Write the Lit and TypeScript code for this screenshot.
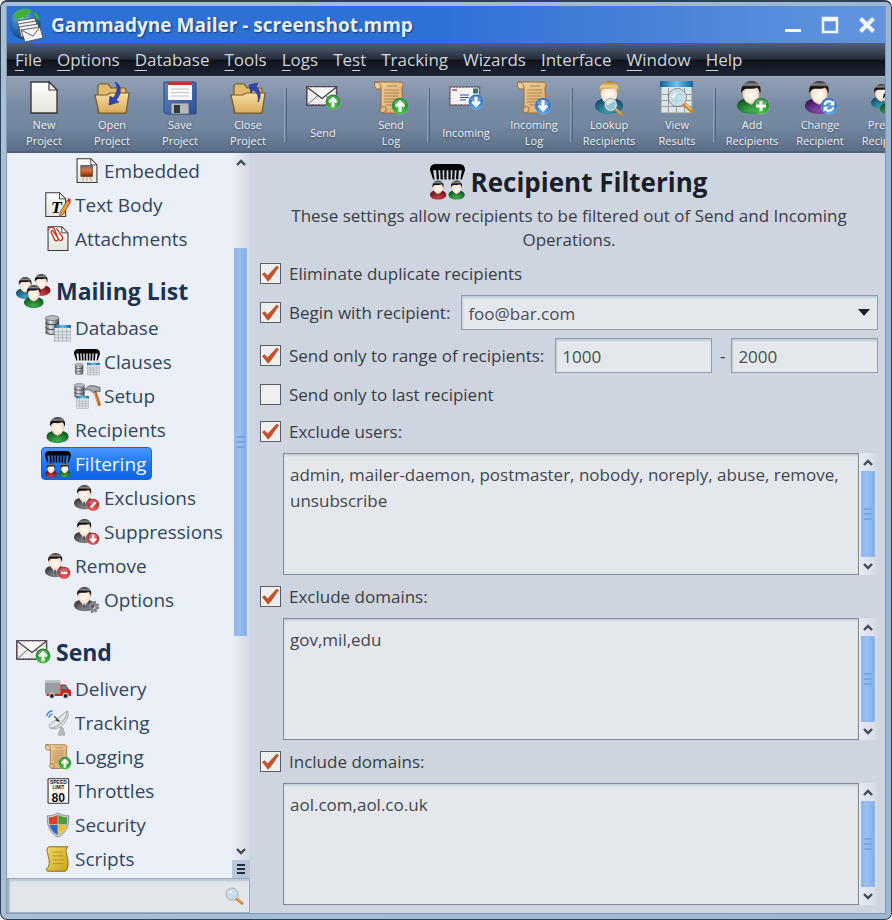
import { LitElement, html, css, svg, nothing, TemplateResult } from "lit";
import { customElement, property, state } from "lit/decorators.js";
import { classMap } from "lit/directives/class-map.js";

/* ---------- icon parts ---------- */

const defs = svg`
  <linearGradient id="paper" x1="0" y1="0" x2="0" y2="1"><stop offset="0" stop-color="#fdfdfa"/><stop offset="1" stop-color="#e4e5dc"/></linearGradient>
  <linearGradient id="folder" x1="0" y1="0" x2="0" y2="1"><stop offset="0" stop-color="#f7dfa4"/><stop offset="1" stop-color="#d9ab5c"/></linearGradient>
  <linearGradient id="parch" x1="0" y1="0" x2="1" y2="1"><stop offset="0" stop-color="#f1d2a0"/><stop offset="1" stop-color="#d9a868"/></linearGradient>
  <linearGradient id="gold" x1="0" y1="0" x2="1" y2="1"><stop offset="0" stop-color="#f2dc63"/><stop offset="1" stop-color="#caa21d"/></linearGradient>
  <linearGradient id="metal" x1="0" y1="0" x2="1" y2="0"><stop offset="0" stop-color="#565b5e"/><stop offset=".35" stop-color="#e3e6e6"/><stop offset="1" stop-color="#4b5053"/></linearGradient>
  <linearGradient id="floppy" x1="0" y1="0" x2="1" y2="1"><stop offset="0" stop-color="#5c86c8"/><stop offset="1" stop-color="#2a4f9a"/></linearGradient>
  <linearGradient id="sunset" x1="0" y1="0" x2="0" y2="1"><stop offset="0" stop-color="#4a6fb0"/><stop offset=".4" stop-color="#e8742a"/><stop offset="1" stop-color="#7c2d14"/></linearGradient>
  <linearGradient id="hdr" x1="0" y1="0" x2="1" y2="0"><stop offset="0" stop-color="#15609c"/><stop offset=".5" stop-color="#6cc3e8"/><stop offset="1" stop-color="#15609c"/></linearGradient>
  <radialGradient id="globe" cx=".4" cy=".3" r=".8"><stop offset="0" stop-color="#7cc4ee"/><stop offset=".5" stop-color="#2d6fb4"/><stop offset="1" stop-color="#0c2f66"/></radialGradient>
  <radialGradient id="skin" cx=".5" cy=".5" r=".6"><stop offset="0" stop-color="#fffaf4"/><stop offset=".6" stop-color="#fbeadb"/><stop offset="1" stop-color="#e0a884"/></radialGradient>
  <radialGradient id="b-green" cx=".5" cy=".8" r=".9"><stop offset="0" stop-color="#4fce45"/><stop offset="1" stop-color="#0b6b1c"/></radialGradient>
  <radialGradient id="b-blue" cx=".5" cy=".8" r=".9"><stop offset="0" stop-color="#62b4f5"/><stop offset="1" stop-color="#164fa8"/></radialGradient>
  <radialGradient id="b-red" cx=".5" cy=".8" r=".9"><stop offset="0" stop-color="#f0605c"/><stop offset="1" stop-color="#a3101a"/></radialGradient>
  <radialGradient id="s-green" cx=".5" cy=".8" r=".8"><stop offset="0" stop-color="#3fae50"/><stop offset="1" stop-color="#0a4d1b"/></radialGradient>
  <radialGradient id="s-teal" cx=".5" cy=".8" r=".8"><stop offset="0" stop-color="#3f9db8"/><stop offset="1" stop-color="#0c4660"/></radialGradient>
  <radialGradient id="s-purple" cx=".5" cy=".8" r=".8"><stop offset="0" stop-color="#8a4bb0"/><stop offset="1" stop-color="#35104f"/></radialGradient>
  <radialGradient id="s-red" cx=".5" cy=".8" r=".8"><stop offset="0" stop-color="#cc3f43"/><stop offset="1" stop-color="#5e0c10"/></radialGradient>
  <radialGradient id="s-grey" cx=".5" cy=".8" r=".8"><stop offset="0" stop-color="#8b8b8d"/><stop offset="1" stop-color="#2c2c30"/></radialGradient>
  <linearGradient id="h-black" x1="0" y1="0" x2="0" y2="1"><stop offset="0" stop-color="#2a2a2a"/><stop offset=".3" stop-color="#8a8a8a"/><stop offset=".45" stop-color="#151515"/><stop offset="1" stop-color="#000"/></linearGradient>
  <linearGradient id="h-blond" x1="0" y1="0" x2="0" y2="1"><stop offset="0" stop-color="#a8762a"/><stop offset=".4" stop-color="#f0cf86"/><stop offset="1" stop-color="#8f5f1a"/></linearGradient>`;

const at = (x: number, y: number, s: number, part: TemplateResult) =>
  svg`<g transform="translate(${x} ${y}) scale(${s})">${part}</g>`;

const person = (shirt: string, hair = "black", suit = false) => svg`
  <path d="M0 25C0 20 5 17 14 17s14 3 14 8c0 5-7 8-14 8S0 30 0 25z" fill="url(#s-${shirt})"/>
  <path d="M9 18l5 ${suit ? 12 : 6} 5-${suit ? 12 : 6}z" fill="#fff"/>
  ${suit ? svg`<path d="M13 22h2l1 5-2 4-2-4z" fill="#5a5e68"/>` : nothing}
  <path d="M5.500 11c0 7 4 12 8.500 12s8.500-5 8.500-12-3-6-8.500-6-8.500-1-8.500 6z" fill="url(#skin)"/>
  <path d="M4.500 12C3 5 8 0 14 0c8 0 11 6 9 13-.4-3-1-5-3-6.500-4 2.500-9 .5-12 1.500-2 1-2.600 2-3.500 4z" fill="url(#h-${hair})"/>`;

const arrowUp = svg`<path d="M0-5.500L5-.5 3.200 1.200 1.300-.7V5.500h-2.600V-.7L-3.200 1.200-5-.5z" fill="#fff" stroke="#fff" stroke-width=".6"/>`;
const arrowDown = svg`<g transform="rotate(180)">${arrowUp}</g>`;
const plus = svg`<path d="M-1.400-5h2.800v3.600H5v2.800H1.400V5h-2.800V1.400H-5v-2.800h3.600z" fill="#fff"/>`;
const slash = svg`<path d="M-3.200 3.200L3.200-3.200" stroke="#fff" stroke-width="3.200"/>`;
const minus = svg`<path d="M-4.500 0h9" stroke="#fff" stroke-width="3"/>`;
const cycle = svg`<path d="M-4.500-1A4.600 4.600 0 0 1 3.400-3.200M4.500 1A4.600 4.600 0 0 1-3.400 3.200" fill="none" stroke="#fff" stroke-width="2"/>
  <path d="M5.400-5.600v5h-5zM-5.400 5.600v-5h5z" fill="#fff"/>`;
const badge = (tone: string, glyph: TemplateResult) => svg`
  <circle r="8.300" fill="url(#b-${tone})" stroke="#fff" stroke-opacity=".3" stroke-width=".6"/>
  <path d="M-6.500-2.500a7 7 0 0 1 13 0C3-1-3-1-6.500-2.500z" fill="#fff" opacity=".25"/>${glyph}`;

const envelope = svg`
  <rect x=".7" y=".7" width="30" height="18.600" fill="#eeeeec" stroke="#3c3c4c" stroke-width="1.200"/>
  <rect x="1.200" y="1.200" width="29" height="17.600" fill="none" stroke="#c0423f" stroke-width="1" stroke-dasharray="2 4"/>
  <rect x="1.200" y="1.200" width="29" height="17.600" fill="none" stroke="#3a55a0" stroke-width="1" stroke-dasharray="2 4" stroke-dashoffset="3"/>
  <path d="M1.500 18.500l11-9.500M30 18.500L19 9" stroke="#707078" fill="none"/>
  <path d="M1.500 1.500L16 12.500 30 1.500" fill="#f8f8f6" stroke="#3c3c44" stroke-width="1.200"/>`;
const envelopeBack = svg`
  <rect x=".7" y=".7" width="30" height="18.600" fill="#f3f3f4" stroke="#66606c"/>
  <rect x="1.200" y="1.200" width="29" height="17.600" fill="none" stroke="#c0423f" stroke-dasharray="2 4"/>
  <rect x="1.200" y="1.200" width="29" height="17.600" fill="none" stroke="#3a55a0" stroke-dasharray="2 4" stroke-dashoffset="3"/>
  <path d="M3 4h5" stroke="#b34a48" stroke-width="1.500"/><rect x="24" y="2.500" width="5" height="5" fill="#3c6e74"/>
  <path d="M11 9h9M11 11.500h9M11 14h6" stroke="#3848b0" stroke-width="1.200"/>`;
const parchment = svg`
  <path d="M1 1h25c3 0 4 3 2 6l1 20c1 4-1 5-4 5H10c-4 0-5-3-3-6V8H3C1 8 0 3 1 1z" fill="url(#parch)" stroke="#9a6a34" stroke-width="1"/>
  <path d="M1 1c4 0 6 2 6 7" fill="none" stroke="#9a6a34"/><path d="M7 27c2-2 5-2 5 1s-2 3.500-3 3.500" fill="#e7bd84" stroke="#9a6a34"/>
  <path d="M13 5h10M10 9h15M10 12h15M10 15h14M10 18h15M10 21h14M12 24h12" stroke="#8d6538" stroke-width=".8" opacity=".8"/>`;
const sheet = svg`
  <path d="M1 1h18l8 8v23H1z" fill="url(#paper)" stroke="#3a3a3a" stroke-width="1.400"/>
  <path d="M19 1v8h8z" fill="#fafaf6" stroke="#3a3a3a" stroke-width="1.200"/>`;
const lens = svg`
  <path d="M15 15l8 7" stroke="#c98432" stroke-width="4" stroke-linecap="round"/>
  <path d="M14.500 13.500l8 7" stroke="#f3cf96" stroke-width="1.200"/>
  <circle cx="9" cy="9" r="7.500" fill="#b4dcec" fill-opacity=".75" stroke="#d9dcdf" stroke-width="2.200"/>
  <circle cx="9" cy="9" r="8.600" fill="none" stroke="#5c6670" stroke-width=".6"/>
  <path d="M5 9a4 4 0 0 1 4-4" stroke="#fff" stroke-width="1.800" fill="none"/>`;
const table = svg`
  <rect x="1" y="1" width="31" height="31" fill="#dfe5e7" stroke="#89949a"/>
  <path d="M1 13.500h31M1 19.500h31M1 25.500h31M8.500 7v25M16.500 7v25M24.500 7v25" stroke="#97a3a8" stroke-width="1.200"/>
  <rect x="0" y="0" width="33" height="6" fill="url(#hdr)"/>`;
const db = svg`
  <path d="M1 5v23c0 5 22 5 22 0V5z" fill="url(#metal)"/>
  <path d="M1 12c0 5 22 5 22 0M1 20c0 5 22 5 22 0M1 28c0 5 22 5 22 0" fill="none" stroke="#34383b" stroke-width="1.600"/>
  <ellipse cx="12" cy="5" rx="11" ry="4" fill="#b9bebf" stroke="#54595c"/>`;
const comb = svg`
  <path d="M0 6C0 2 2 0 6 0h22c4 0 6 2 6 6l-1 3-2 6h-1.500L31 6H3l1.500 9H3L1 9z" fill="#050505"/>
  <path d="M7 5l.7 10M11 5l.4 10M15 5v10M19 5v10M23 5l-.4 10M27 5l-.7 10" stroke="#050505" stroke-width="2.200"/>`;
const folder = svg`
  <path d="M3 32V5c0-1 1-2 2-2h8l3 4h13c1 0 2 1 2 2v23z" fill="#e3bb6f" stroke="#7a5a22" stroke-width="1.200"/>
  <path d="M0 14h12l3-2h19l-3 20H4z" fill="url(#folder)" stroke="#7a5a22" stroke-width="1.200"/>`;
const hammer = svg`
  <path d="M13 6l6 18" stroke="#c06a30" stroke-width="4" stroke-linecap="round"/>
  <path d="M12.500 8l5 15" stroke="#eaa770" stroke-width="1.200"/>
  <path d="M1 6C4 0 10 0 14 1l6 2v5l-5-1-4 2C8 5 5 5 1 6z" fill="#a7adb2" stroke="#4b5053"/>`;
const gear = svg`
  <circle r="5" fill="none" stroke="#85898d" stroke-width="4"/>
  <circle r="7.500" fill="none" stroke="#6b6f73" stroke-width="2.600" stroke-dasharray="2.900 3"/>`;

const icons: Record<string, TemplateResult> = {
  page: at(3, 0, 1, sheet),
  open: svg`${folder}<path d="M20 1c7 3 7 12 1 18l3 2-10 3 1-9 3 2c5-6 5-11 2-16z" fill="#2f46b5" stroke="#1c2b80" stroke-width=".6"/>`,
  close: svg`${folder}<path d="M27 21c4-6 2-13-2-15l2-4-9 2 2 8 2-3c4 2 6 6 5 12z" fill="#2f46b5" stroke="#1c2b80" stroke-width=".6"/>`,
  save: svg`<path d="M1 1h31l1 1v31H3l-2-2z" fill="url(#floppy)" stroke="#2a4480"/>
    <path d="M5 1h24v18H5z" fill="#f7f7f8"/><path d="M5 1h24v3H5z" fill="#c5342c"/>
    <path d="M8 8h18M8 11.500h18M8 15h18" stroke="#c4c8d0"/>
    <path d="M8 22h18v11H8z" fill="#b4b9be" stroke="#555c66" stroke-width=".8"/><path d="M11 24h6v8h-6z" fill="#33373d"/>`,
  send: svg`${at(0, 5, 1, envelope)}${at(27, 21, .9, badge("green", arrowUp))}`,
  incoming: svg`${at(0, 5, 1, envelopeBack)}${at(27, 21, .9, badge("blue", arrowDown))}`,
  sendLog: svg`${parchment}${at(26, 25, 1, badge("green", arrowUp))}`,
  incomingLog: svg`${parchment}${at(26, 25, 1, badge("blue", arrowDown))}`,
  lookup: svg`${at(3, 0, 1, person("teal", "blond"))}${at(12, 17, .75, lens)}`,
  view: svg`${table}${at(8, 7, 1.050, lens)}`,
  add: svg`${at(2, 0, 1, person("green"))}${at(26, 25, 1, badge("green", plus))}`,
  change: svg`${at(2, 0, 1, person("purple"))}${at(26, 25, 1, badge("blue", cycle))}`,
  preview: svg`${at(0, 3, .75, person("teal"))}${at(9, 9, .75, person("green"))}`,
  embedded: svg`${at(3, 0, 1, sheet)}<path d="M14 23l-3 7M20 23l3 7M17 23v7" stroke="#b7793c"/><rect x="9" y="10" width="15" height="14" fill="url(#sunset)" stroke="#6d3a20"/>`,
  textBody: svg`${at(0, 0, 1, sheet)}<text x="8" y="27" font-family="Liberation Serif, serif" font-style="italic" font-weight="700" font-size="23">T</text>
    <path d="M29 11l4 3-9 15-5 3 1-6z" fill="#eb9a3c" stroke="#7a4a16"/><path d="M29 11l4 3 1-4-3-2z" fill="#cf3434"/>`,
  attach: svg`${at(3, 0, 1, sheet)}<path d="M4 6c1-6 8-6 9 0l4 10c1 4-4 5-5 1L8 8c0-2 2-3 3-1l6 9c3 6 8 2 5-3L15 3" fill="none" stroke="#c2392b" stroke-width="1.700"/>`,
  people: svg`${at(0, 3, .66, person("teal"))}${at(16, 0, .66, person("red"))}${at(8, 11, .7, person("green"))}`,
  database: svg`${at(0, 0, .8, db)}${at(12, 13, .66, table)}`,
  clauses: svg`${comb}${at(1, 18, .48, db)}${at(17, 18, .5, table)}`,
  setup: svg`${at(0, 0, .6, db)}${at(3, 17, .5, table)}${at(13, 3, 1.050, hammer)}`,
  recipients: at(2, 0, 1.030, person("green")),
  filtering: svg`${comb}${at(0, 16, .56, person("red"))}${at(18, 16, .56, person("green"))}`,
  exclusions: svg`${at(0, 0, .96, person("grey", "black", true))}${at(25, 26, .98, badge("red", slash))}`,
  suppressions: svg`${at(0, 0, .96, person("grey", "black", true))}${at(25, 26, .98, badge("red", arrowDown))}`,
  remove: svg`${at(0, 0, .96, person("grey", "black", true))}${at(25, 26, .98, badge("red", minus))}`,
  options: svg`${at(0, 0, .96, person("grey", "black", true))}${at(25, 26, .9, gear)}`,
  delivery: svg`<path d="M0 6h20v17H0z" fill="#9b9ea1"/><path d="M0 6h20v3H0z" fill="#b9bcbf"/>
    <path d="M20 11h7l4 6 3 2v7H2v-3h18z" fill="#c8281f"/><path d="M22 13h5l2 4h-7z" fill="#4f8fbd"/>
    <g fill="#1e1e1e" stroke="#cfd2d4" stroke-width="1.500"><circle cx="9" cy="26" r="3.200"/><circle cx="27" cy="26" r="3.200"/></g>`,
  tracking: svg`<path d="M21 22l3 2 2 9h-9z" fill="#b6babd" stroke="#83878a" stroke-width=".6"/>
    <path d="M29 1C34 9 22 28 7 24 4 21 6 18 10 16z" fill="#e4e6e7" stroke="#8b9094"/><path d="M29 1C29 11 19 22 7 24" fill="none" stroke="#a8acaf" stroke-width="1.500"/>
    <path d="M19 15l-7-7M19 15l-5-2" stroke="#44484c" stroke-width="1.600"/>
    <path d="M5 10a6 6 0 0 1 5-5M2 8a10 10 0 0 1 8-7" fill="none" stroke="#3f80d8" stroke-width="1.700"/>`,
  throttles: svg`<rect x="4" y="1" width="27" height="32" rx="1" fill="#fbfbfb" stroke="#2c2c2c" stroke-width="1.400"/>
    <g font-family="Liberation Sans, sans-serif" font-weight="700" text-anchor="middle" fill="#111"><text x="17.500" y="8" font-size="6.500">SPEED</text><text x="17.500" y="15" font-size="6">LIMIT</text><text x="17.500" y="31" font-size="16">80</text></g>`,
  security: svg`<path d="M17 1c4 3 9 4 14 4 1 14-4 23-14 28C7 28 2 19 3 5c5 0 10-1 14-4z" fill="#c9cdd0" stroke="#7a7f83"/>
    <path d="M16.500 4v12H5.500C5 13 5 10 5 7c4 0 8-1 11.500-3z" fill="#d6422b"/><path d="M17.500 4c4 2 7 3 11.500 3 0 3 0 6-.5 9h-11z" fill="#48a03c"/>
    <path d="M6 17h10.500v13C11 27 7 23 6 17z" fill="#2f68c8"/><path d="M17.500 17H28c-1 6-5 10-10.500 13z" fill="#f0c52c"/>`,
  scripts: svg`<path d="M5 1h25c-4 4-2 8-1 13s3 14-2 19H4c-3 0-3-4 0-5 3-6 1-11 0-16S1 3 5 1z" fill="url(#gold)" stroke="#7d6511" stroke-width="1.200"/>
    <path d="M9 8h15M9 13h15M10 18h15M10 23h14" stroke="#a98a1c"/>`,
  search: at(3, 3, 1.200, lens),
  app: svg`<circle cx="16" cy="16" r="15.500" fill="url(#globe)"/><path d="M5 6C9 1 15 0 20 1l3 3-4 2-3 5-3-2-4 3-4-2z" fill="#3fae3c"/><path d="M24 3c4 2 6 6 7 10l-4-3z" fill="#3fae3c"/>
    <g stroke="#4b4f58" stroke-width=".9" fill="#f4f4f6"><path d="M8 13l18-3 2 10-18 3z"/><path d="M9 16l18-3 2 10-18 3z"/><path d="M10 19l19-3 2 10-19 3z"/><path d="M12 22l19-3 3 11-18 4z"/><path d="M12 22l12 6 7-9" fill="none"/></g>`,
};

const icon = (name: string) =>
  html`<svg class="icon" viewBox="0 0 34 34" aria-hidden="true">${icons[name]}</svg>`;

/* ---------- data ---------- */

const menus: [string, string, string][] = [
  ["", "F", "ile"], ["", "O", "ptions"], ["", "D", "atabase"], ["", "T", "ools"], ["", "L", "ogs"], ["Te", "s", "t"],
  ["T", "r", "acking"], ["Wi", "z", "ards"], ["", "I", "nterface"], ["", "W", "indow"], ["", "H", "elp"],
];

const tools: [string, string][][] = [
  [["page", "New Project"], ["open", "Open Project"], ["save", "Save Project"], ["close", "Close Project"]],
  [["send", "Send"], ["sendLog", "Send Log"]],
  [["incoming", "Incoming"], ["incomingLog", "Incoming Log"]],
  [["lookup", "Lookup Recipients"], ["view", "View Results"]],
  [["add", "Add Recipients"], ["change", "Change Recipient"], ["preview", "Preview Recipients"]],
];

const tree: [number, string, string][] = [
  [2, "embedded", "Embedded"], [1, "textBody", "Text Body"], [1, "attach", "Attachments"],
  [0, "people", "Mailing List"],
  [1, "database", "Database"], [2, "clauses", "Clauses"], [2, "setup", "Setup"], [1, "recipients", "Recipients"],
  [1, "filtering", "Filtering"], [2, "exclusions", "Exclusions"], [2, "suppressions", "Suppressions"],
  [1, "remove", "Remove"], [2, "options", "Options"],
  [0, "send", "Send"],
  [1, "delivery", "Delivery"], [1, "tracking", "Tracking"], [1, "sendLog", "Logging"], [1, "throttles", "Throttles"],
  [1, "security", "Security"], [1, "scripts", "Scripts"],
];

const lists: [string, string, string][] = [
  ["users", "Exclude users:", "admin, mailer-daemon, postmaster, nobody, noreply, abuse, remove, unsubscribe"],
  ["domains", "Exclude domains:", "gov,mil,edu"],
  ["include", "Include domains:", "aol.com,aol.co.uk"],
];

const base = css`
  *, *::before, *::after { box-sizing: border-box; }
  button, input, select, textarea { font: inherit; color: inherit; margin: 0; }
  button { border: 0; background: none; padding: 0; }
`;

@customElement("scroll-track")
export class ScrollTrack extends LitElement {
  @property() label = "Scroll";

  static styles = [base, css`
    :host { display: flex; flex-direction: column; align-items: stretch; padding: 0 3px 0 2px;
      background: linear-gradient(90deg, #e6eaf1, #dee3eb 60%, #cfd6e0); }
    button { flex: none; height: 18px; display: grid; place-items: center; }
    svg { width: 10px; height: 7px; fill: none; stroke: #3f4a5e; stroke-width: 2.4; }
    .space { flex: var(--before, 0) 0 0px; }
    .thumb { flex: var(--size, 1) 0 0px; display: grid; place-content: center; gap: 3px;
      background: linear-gradient(90deg, #8db9f0, #98c0f0 40%, #7fb0ea); border: 1px solid #94baec; }
    .thumb i { width: 8px; height: 2px; background: #7aa6de; }
    .rest { flex: var(--after, 0) 0 0px; }
  `];

  render() {
    return html`
      <button aria-label="${this.label} up"><svg viewBox="0 0 10 7"><path d="M1 6l4-4 4 4"/></svg></button>
      <div class="space"></div>
      <div class="thumb"><i></i><i></i><i></i></div>
      <div class="rest"></div>
      <button aria-label="${this.label} down"><svg viewBox="0 0 10 7"><path d="M1 1l4 4 4-4"/></svg></button>`;
  }
}

@customElement("app-root")
export class AppRoot extends LitElement {
  @state() private selected = "Filtering";

  static styles = [base, css`
    :host { display: block; font-family: "Open Sans", "Noto Sans", sans-serif; font-size: 17px; color: #3a3d44; }
    .defs { position: absolute; width: 0; height: 0; }
    .icon { display: block; flex: none; width: 26px; height: 26px; overflow: visible; }
    .window { height: 100vh; min-height: 720px; display: flex; flex-direction: column; overflow: hidden;
      border: 1px solid #2f4054; border-top-width: 2px; border-radius: 7px; padding: 4px 5px 5px;
      background: linear-gradient(90deg, #a9bfd8, #9cb6d2); }
    .frame { flex: 1; min-height: 0; display: flex; flex-direction: column; border: 1px solid #7f99b5; border-top: 0; }

    .title { flex: none; height: 37px; display: flex; align-items: center; padding: 0 9px 0 2px;
      background: linear-gradient(90deg, #2c70d5, #2f72d6 50%, #6395dd); color: #e6eefb; }
    .title .icon { width: 34px; height: 34px; }
    .title h1 { flex: 1; margin: 0 0 0 8px; font-size: 19px; line-height: 26px; font-weight: 700; white-space: nowrap;
      text-shadow: 1px 1px 2px #16386e; }
    .title button { width: 18px; height: 20px; margin-left: 19px; }
    .title button svg { display: block; width: 18px; height: 18px; }

    .menu { flex: none; height: 33px; display: flex; align-items: center; gap: 15px; padding: 0 8px; color: #cfd4db;
      background: linear-gradient(180deg, #50607a, #262d3a 49%, #10141b 51%, #1b2438); line-height: 24px; white-space: nowrap; }
    .menu u { text-underline-offset: 4px; text-decoration-thickness: 1px; }

    .tools { flex: none; height: 77px; display: flex; padding: 0 3px; overflow: hidden; color: #eef2f7;
      border-top: 1px solid #a7b2c1; border-bottom: 2px solid #4f6078;
      background: linear-gradient(180deg, #93a1b6, #778aa4 40%, #7488a1 65%, #5c6f88); }
    .group { display: flex; flex: none; }
    .group + .group::before { content: ""; width: 3px; height: 54px; margin: 11px 2px; border: solid #566881; border-width: 0 1px 0 0;
      border-left: 1px solid #8f9fb3; }
    .tools button { width: 68px; display: flex; flex-direction: column; align-items: center; font-size: 11px; line-height: 16px;
      text-shadow: 0 1px 2px #3c4a5e; }
    .tools .icon { width: 34px; height: 34px; margin: 4px 0 2px; }
    .tools span { height: 32px; width: min-content; display: grid; place-items: center; text-align: center; }

    .body { flex: 1; min-height: 0; display: grid; grid-template-columns: 243px minmax(0, 1fr); }
    .side { display: flex; flex-direction: column; min-height: 0; background: #ebf0f8; }
    .nav { flex: 1; min-height: 0; display: flex; }
    nav { flex: 1; overflow: hidden; display: flex; flex-direction: column; align-items: flex-start; color: #33465f; font-size: 19px;
      padding-top: 1px; }
    nav a { flex: none; height: 33px; margin: 0 0 1px 34px; display: flex; align-items: center; gap: 4px; padding: 0 5px 0 3px; color: inherit;
      text-decoration: none; white-space: nowrap; line-height: 28px; border: 1px solid transparent; border-radius: 4px; }
    nav a.deep { margin-left: 63px; }
    nav a.head { height: 40px; margin: 15px 0 0 5px; gap: 6px; font-size: 23px; font-weight: 700; color: #1d3353; }
    nav a.head .icon { width: 34px; height: 34px; }
    nav a.on { color: #f2f7ff; border-color: #1a63d6; background: linear-gradient(180deg, #4a96fa, #1f78f4 50%, #0c63e6); }
    .rail { width: 18px; display: flex; flex-direction: column; }
    .rail scroll-track { flex: 1; --before: 77; --size: 388; --after: 207; background: linear-gradient(90deg, #ebf0f8, #dfe4ec 50%, #d2d8e2); }
    .more { height: 18px; display: grid; place-content: center; gap: 2px; background: #b9c6d9; }
    .more i { width: 8px; height: 2px; background: #232d3a; }
    .search { flex: none; height: 35px; display: flex; align-items: center; padding: 0 5px; background: #e2e6eb; border: 2px solid #a3aebd; border-width: 1px 1px 1px 2px;
      box-shadow: inset 1px 2px 2px #bcc5d2; }
    .search input { flex: 1; min-width: 0; border: 0; background: none; outline: 0; }
    .search .icon { width: 20px; height: 20px; }

    main { display: flex; flex-direction: column; gap: 4px; padding: 10px 7px 8px 10px; min-width: 0; background: #ced5e0; }
    .heading { display: flex; justify-content: center; align-items: center; gap: 5px; height: 37px; color: #1b1f28; }
    .heading .icon { width: 35px; height: 35px; }
    h2 { margin: 0; font-size: 26px; line-height: 36px; font-weight: 700; }
    .about { margin: 0; text-align: center; line-height: 24px; }
    .row { flex: none; height: 35px; display: flex; align-items: center; line-height: 24px; }
    .row.range { margin-top: 4px; }
    .row label { margin-left: 8px; white-space: nowrap; }
    .check { appearance: none; flex: none; width: 21px; height: 21px; border: 1px solid #5b5e63; background: #edeff0; display: grid; place-items: center; }
    .check:checked::after { content: ""; width: 17px; height: 17px; background: #c4512a;
      clip-path: polygon(0 53%, 15% 42%, 33% 62%, 86% 5%, 100% 12%, 54% 78%, 36% 98%); }
    .field { height: 35px; min-width: 0; border: 1px solid #8f9bb0; border-radius: 0; background: #e4e8ed; padding: 2px 6px 0; outline: 0;
      box-shadow: inset 1px 2px 2px #c3cbd8; color: #4a4d53; }
    .pick { flex: 1; margin-left: 11px; display: grid; }
    .pick select { grid-area: 1 / 1; appearance: none; width: 100%; }
    .pick svg { grid-area: 1 / 1; justify-self: end; align-self: center; width: 12px; height: 7px; margin-right: 8px; pointer-events: none; }
    .range .field { flex: 157 1 0px; margin-left: 11px; }
    .range .field + label { margin-left: 8px; }
    .range .field.last { flex-grow: 146; margin-left: 6px; }
    .list { flex: 1; min-height: 60px; margin-left: 23px; display: flex; }
    textarea { flex: 1; min-width: 0; resize: none; overflow: hidden; outline: 0; padding: 8px 6px; line-height: 26px; color: #43464c;
      border: 1px solid #838c9c; border-radius: 0; background: #e4e8ed; box-shadow: inset 0 2px 2px #c9d0dc; }
    .list scroll-track { width: 19px; }
    .tight { margin-top: -2px; }
  `];

  private check(id: string, text: string, on = true) {
    return html`<input class="check" type="checkbox" id=${id} ?checked=${on}><label for=${id}>${text}</label>`;
  }

  render() {
    return html`
      <svg class="defs" aria-hidden="true"><defs>${defs}</defs></svg>
      <div class="window"><div class="frame">
        <header class="title">
          ${icon("app")}
          <h1>Gammadyne Mailer - screenshot.mmp</h1>
          <button aria-label="Minimize"><svg viewBox="0 0 18 18"><path d="M1 14.500h16" stroke="#f2f6fd" stroke-width="3"/></svg></button>
          <button aria-label="Maximize"><svg viewBox="0 0 18 18"><path d="M2 2h14v14H2zM2 4h14" fill="none" stroke="#f2f6fd" stroke-width="2.500"/></svg></button>
          <button aria-label="Close"><svg viewBox="0 0 18 18"><path d="M2.500 2.500l13 13M15.500 2.500l-13 13" stroke="#f2f6fd" stroke-width="4"/></svg></button>
        </header>
        <div class="menu" role="menubar">
          ${menus.map(([a, k, b]) => html`<button role="menuitem">${a}<u>${k}</u>${b}</button>`)}
        </div>
        <div class="tools" role="toolbar">
          ${tools.map((g) => html`<div class="group">${g.map(([i, t]) => html`<button>${icon(i)}<span>${t}</span></button>`)}</div>`)}
        </div>
        <div class="body">
          <aside class="side">
            <div class="nav">
              <nav>
                ${tree.map(([level, i, t]) => html`<a href="#${t.replace(" ", "-")}" @click=${() => (this.selected = t)}
                  class=${classMap({ head: level === 0, deep: level === 2, on: t === this.selected })}>${icon(i)}<span>${t}</span></a>`)}
              </nav>
              <div class="rail">
                <scroll-track label="Scroll tree"></scroll-track>
                <button class="more" aria-label="Tree options"><i></i><i></i><i></i></button>
              </div>
            </div>
            <div class="search"><input type="search" aria-label="Search">${icon("search")}</div>
          </aside>
          <main>
            <div class="heading">${icon("filtering")}<h2>Recipient Filtering</h2></div>
            <p class="about">These settings allow recipients to be filtered out of Send and Incoming Operations.</p>
            <div class="row">${this.check("dup", "Eliminate duplicate recipients")}</div>
            <div class="row">
              ${this.check("begin", "Begin with recipient:")}
              <div class="pick">
                <select class="field" aria-label="Recipient"><option>foo@bar.com</option></select>
                <svg viewBox="0 0 12 7"><path d="M0 0h12L6 7z" fill="#1f242b"/></svg>
              </div>
            </div>
            <div class="row range">
              ${this.check("range", "Send only to range of recipients:")}
              <input class="field" id="from" value="1000" aria-label="From"><label for="to">-</label><input class="field last" id="to" value="2000">
            </div>
            <div class="row">${this.check("last", "Send only to last recipient", false)}</div>
            ${lists.map(([id, label, text], n) => html`
              <div class="row ${n === 0 ? "tight" : ""}">${this.check(id, label)}</div>
              <div class="list"><textarea aria-label=${label} .value=${text}></textarea><scroll-track label="Scroll list"></scroll-track></div>`)}
          </main>
        </div>
      </div></div>`;
  }
}
